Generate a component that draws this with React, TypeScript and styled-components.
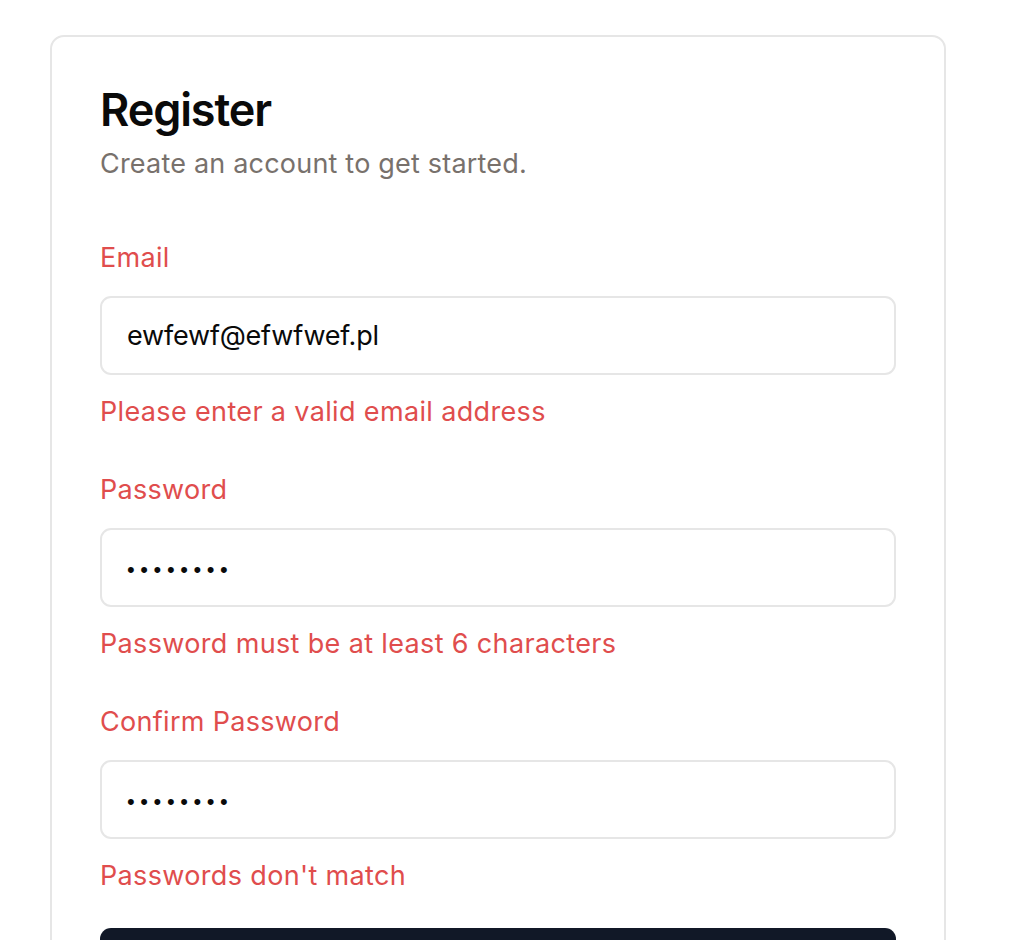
import React from "react";
import styled, { createGlobalStyle } from "styled-components";

const Global = createGlobalStyle`
  html, body { margin: 0; padding: 0; background: #ffffff; }
  body { font-family: Inter, "Noto Sans", "Liberation Sans", sans-serif; }
  * { box-sizing: border-box; }
`;

const Page = styled.div`
  padding: 35px 0 0 50px;
  width: 1022px;
  height: 940px;
  overflow: hidden;
`;

const Card = styled.div`
  width: 896px;
  border: 2px solid #e6e6e6;
  border-radius: 14px;
  padding: 46px 48px 60px 48px;
  display: flex;
  flex-direction: column;
`;

const Title = styled.h1`
  margin: 0;
  font-size: 45px;
  line-height: 54px;
  font-weight: 600;
  letter-spacing: -0.025em;
  color: #0a0a0a;
`;

const Subtitle = styled.p`
  margin: 10px 0 0 0;
  font-size: 27px;
  line-height: 33px;
  letter-spacing: 0.2px;
  color: #78716c;
`;

const Form = styled.form`
  margin-top: 61px;
  display: flex;
  flex-direction: column;
  gap: 45px;
`;

const Field = styled.div`
  display: flex;
  flex-direction: column;
`;

const Label = styled.label<{ $error?: boolean }>`
  font-size: 27px;
  line-height: 33px;
  font-weight: 400;
  letter-spacing: 0.3px;
  color: ${(p) => (p.$error ? "#e04d4d" : "#0a0a0a")};
`;

const Input = styled.input<{ $masked?: boolean }>`
  margin-top: 22px;
  height: 79px;
  width: 100%;
  border: 2px solid #e6e6e6;
  border-radius: 11px;
  padding: 0 25px;
  font-family: ${(p) => (p.$masked ? '"Liberation Sans", sans-serif' : "inherit")};
  font-size: ${(p) => (p.$masked ? "22px" : "27px")};
  letter-spacing: ${(p) => (p.$masked ? "5.6px" : "-0.2px")};
  padding-top: ${(p) => (p.$masked ? "5px" : "0")};
  color: #0a0a0a;
  background: #ffffff;
  outline: none;
`;

const ErrorText = styled.p`
  margin: 20px 0 0 0;
  font-size: 27px;
  line-height: 33px;
  font-weight: 400;
  letter-spacing: 0.35px;
  color: #e04d4d;
`;

const Button = styled.button`
  margin-top: 36px;
  height: 79px;
  width: 100%;
  border: none;
  border-radius: 11px;
  background: #111827;
  color: #ffffff;
  font-family: inherit;
  font-size: 27px;
  font-weight: 500;
`;

const fields = [
  { id: "email", label: "Email", type: "email", value: "ewfewf@efwfwef.pl", error: "Please enter a valid email address" },
  { id: "password", label: "Password", type: "password", value: "wefwefwe", error: "Password must be at least 6 characters" },
  { id: "confirm", label: "Confirm Password", type: "password", value: "wefwefwe", error: "Passwords don't match" },
];

export default function App() {
  return (
    <>
      <Global />
      <Page>
        <Card>
          <Title>Register</Title>
          <Subtitle>Create an account to get started.</Subtitle>
          <Form onSubmit={(e) => e.preventDefault()}>
            {fields.map((f) => (
              <Field key={f.id}>
                <Label htmlFor={f.id} $error>{f.label}</Label>
                <Input id={f.id} type={f.type} defaultValue={f.value} $masked={f.type === "password"} />
                <ErrorText>{f.error}</ErrorText>
              </Field>
            ))}
          </Form>
          <Button type="submit">Register</Button>
        </Card>
      </Page>
    </>
  );
}
